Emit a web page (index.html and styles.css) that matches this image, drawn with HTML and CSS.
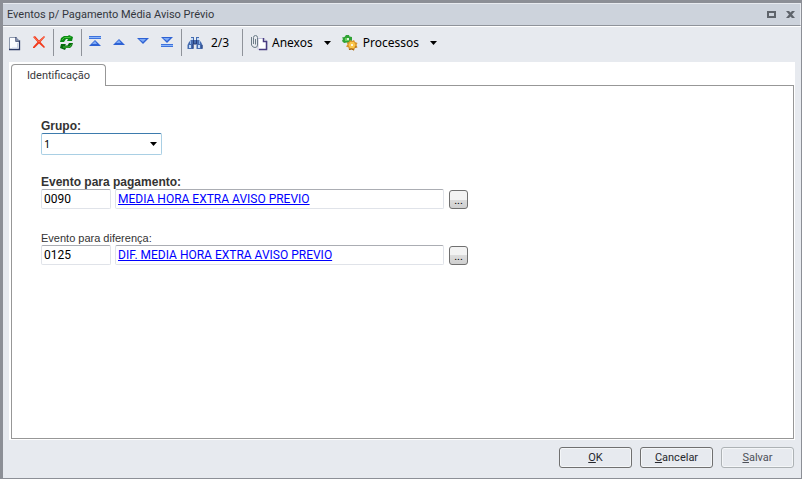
FILE: index.html
```html
<!doctype html>
<html lang="pt-BR">
<head>
    <meta charset="UTF-8">
    <title>Eventos p/ Pagamento Média Aviso Prévio</title>
    <link rel="stylesheet" href="styles.css">
</head>
<body>
<div class="window">
    <div class="titlebar">
        <h1 class="title">Eventos p/ Pagamento Média Aviso Prévio</h1>
        <button type="button" class="win-btn" aria-label="Maximizar">
            <svg width="9" height="7" viewBox="0 0 9 7"><path d="M0 0H9V7H0ZM2 2V5H7V2Z" fill="#5f646b" fill-rule="evenodd"/></svg>
        </button>
        <button type="button" class="win-btn" aria-label="Fechar">
            <svg width="9" height="7" viewBox="0 0 9 7"><path d="M0 0H3L4.500 1.500L6 0H9L6 3.500L9 7H6L4.500 5.500L3 7H0L3 3.500Z" fill="#5f646b"/></svg>
        </button>
    </div>
    <div class="toolbar">
        <button type="button" class="tool" aria-label="Novo">
            <svg width="16" height="16" viewBox="0 0 16 16">
                <path d="M2 2.500H9L12 5.500V14.500H2Z" fill="#fbfcff"/>
                <path d="M2.500 14V2.500H9" fill="none" stroke="#8d98ac"/>
                <path d="M9 2V6H12.500V14.500H2" fill="none" stroke="#2c3a66" stroke-width="1.300"/>
                <path d="M9 2L13 6H9Z" fill="#7c89a6"/>
                <path d="M10.500 8V13H5" fill="none" stroke="#ccd6ec"/>
            </svg>
        </button>
        <button type="button" class="tool" aria-label="Excluir">
            <svg width="16" height="16" viewBox="0 0 16 16">
                <path d="M2 2L4 1L8 5.500L13 1L14 2L9.500 7L14 12L13 13L8 8.500L3.500 13L2 13L2 12L6.500 7Z" fill="#f23a1c"/>
                <path d="M3 2L8 7L13 2" fill="none" stroke="#ff7350" stroke-width=".8"/>
            </svg>
        </button>
        <span class="sep"></span>
        <button type="button" class="tool" aria-label="Atualizar">
            <svg width="16" height="16" viewBox="0 0 16 16">
                <path d="M1 7L2 3L5 1L9 1L10 0L14 2L13 6H8L9 4H7L5 7Z" fill="#0a8a14"/>
                <path d="M14 8L13 11L11 13H7L6 15L1 13L2 9H7L6 10.500H8.500L10 8Z" fill="#066b0c"/>
                <path d="M3 5L5.500 2.500H10L12 2M4 12H10.500L12.500 9.500" fill="none" stroke="#47c33c"/>
            </svg>
        </button>
        <span class="sep"></span>
        <button type="button" class="tool" aria-label="Primeiro">
            <svg width="16" height="16" viewBox="0 0 16 16">
                <path d="M2 1H14V4H2Z" fill="#3e73dd"/><path d="M2 2.500H14" stroke="#8db7fa"/>
                <path d="M8 5L14 11H2Z" fill="#2e62d4"/><path d="M8 6L10 9H5Z" fill="#7eaaf6"/>
            </svg>
        </button>
        <button type="button" class="tool" aria-label="Anterior">
            <svg width="16" height="16" viewBox="0 0 16 16"><path d="M8 4L14 10H2Z" fill="#2e62d4"/><path d="M8 5L10 8H5Z" fill="#7eaaf6"/></svg>
        </button>
        <button type="button" class="tool" aria-label="Próximo">
            <svg width="16" height="16" viewBox="0 0 16 16"><path d="M2 3H14L8 9Z" fill="#2e62d4"/><path d="M4 4H11L8 7Z" fill="#7eaaf6"/></svg>
        </button>
        <button type="button" class="tool" aria-label="Último">
            <svg width="16" height="16" viewBox="0 0 16 16">
                <path d="M2 2H14L8 8Z" fill="#2e62d4"/><path d="M4 3H11L8 6Z" fill="#7eaaf6"/>
                <path d="M2 9H14V12H2Z" fill="#3e73dd"/><path d="M2 10.500H14" stroke="#8db7fa"/>
            </svg>
        </button>
        <span class="sep"></span>
        <button type="button" class="tool find" aria-label="Localizar">
            <svg width="16" height="16" viewBox="0 0 16 16">
                <path d="M4 2H7V5H9V2H12V5L14 7L15.500 10V14H9.500V9H6.500V14H.5V10L2 7L4 5Z" fill="#456cb0"/>
                <path d="M4 3H6V5H4ZM10 3H12V5H10ZM2 10H4V13H2ZM11 10H13V13H11Z" fill="#c6dcf8"/>
                <path d="M3.500 6V9M12.500 6V9" stroke="#8fb2e6"/>
                <path d="M6.500 5V9H9.500V5M6 9V13.500M15 10V13.500" fill="none" stroke="#273d78"/>
            </svg>
        </button>
        <span class="counter">2/3</span>
        <span class="sep"></span>
        <button type="button" class="menu">
            <svg width="18" height="16" viewBox="0 0 18 16">
                <path d="M7 3.500H13L16 6.500V14.500H7Z" fill="#fff" stroke="#c3c3dd"/>
                <path d="M12.500 3V6.500H15.500V14.500H8" fill="none" stroke="#493c80" stroke-width="1.500"/>
                <path d="M4.500 4V9.500M2.500 9V2.500Q2.500 .5 4.500 .5T6.500 2.500V10Q6.500 12.500 4 12.500T.5 10V2" fill="none" stroke="#6d7d88"/>
            </svg>
            <span class="menu-text">Anexos</span>
            <svg class="caret" width="7" height="4" viewBox="0 0 7 4"><path d="M0 0H7L3.500 4Z"/></svg>
        </button>
        <button type="button" class="menu">
            <svg width="18" height="16" viewBox="0 0 18 16">
                <path d="M4 0H7L7.500 1.500L10 2V5L9 8L6 9L5 7.500L2 8L0 6L1 4L0 2.500L2.500 2Z" fill="#31a236"/>
                <path d="M3 3H7V6H3Z" fill="#68cf5c"/><path d="M5 3H7V5H5Z" fill="#e0f4dc"/>
                <path d="M8 5L10 6L12 5L13 7L15.500 8L14.500 10L15.500 12.500L13 13L12 15.500L9.500 14.500L7 15L6.500 12.500L4 11.500L5.500 9.500L5 7.500L7 7Z" fill="#d9952a"/>
                <path d="M8 7H12L13.500 10L12 13H8L6.500 10Z" fill="#fac64a"/><path d="M9 9H11V11H9Z" fill="#fff5d8"/>
                <path d="M7 14.500L9.500 14L12 15M14.500 12H13" fill="none" stroke="#9a6318"/>
            </svg>
            <span class="menu-text">Processos</span>
            <svg class="caret" width="7" height="4" viewBox="0 0 7 4"><path d="M0 0H7L3.500 4Z"/></svg>
        </button>
    </div>
    <form class="main">
        <div class="tabs">
            <button type="button" class="tab">Identificação</button>
        </div>
        <div class="panel">
            <div class="field">
                <label class="label strong" for="grupo">Grupo:</label>
                <div class="combo">
                    <select id="grupo" class="select"><option>1</option></select>
                    <svg class="combo-arrow" width="7" height="4" viewBox="0 0 7 4"><path d="M0 0H7L3.500 4Z"/></svg>
                </div>
            </div>
            <div class="field">
                <label class="label strong" for="pagamento">Evento para pagamento:</label>
                <div class="row">
                    <input id="pagamento" class="box code" type="text" value="0090">
                    <div class="box desc"><a class="link" href="#">MEDIA HORA EXTRA AVISO PREVIO</a></div>
                    <button type="button" class="more">...</button>
                </div>
            </div>
            <div class="field">
                <label class="label" for="diferenca">Evento para diferença:</label>
                <div class="row">
                    <input id="diferenca" class="box code" type="text" value="0125">
                    <div class="box desc"><a class="link" href="#">DIF. MEDIA HORA EXTRA AVISO PREVIO</a></div>
                    <button type="button" class="more">...</button>
                </div>
            </div>
        </div>
    </form>
    <div class="footer">
        <button type="button" class="btn"><u>O</u>K</button>
        <button type="button" class="btn"><u>C</u>ancelar</button>
        <button type="button" class="btn" disabled><u>S</u>alvar</button>
    </div>
</div>
</body>
</html>
```
FILE: styles.css
```css
* {box-sizing: border-box; margin: 0; padding: 0;}
body {padding-bottom: 1px; background: #fff; font-family: Roboto, sans-serif; font-size: 11px; color: #000;}
button {font: inherit; color: inherit; background: none; border: 0;}
svg {display: block; flex: none;}

.window {display: flex; flex-direction: column; min-height: calc(100vh - 1px); background: #e7eaef; border: solid #8c8f96; border-width: 3px 1px 1px 3px;}

.titlebar {display: flex; align-items: center; gap: 10px; height: 23px; padding: 0 5px 0 4px; background: #cdd3dc; border: 1px solid #e7eaef; border-left: 0; border-bottom: 1px solid #8f939a;}
.title {flex: 1; font-size: 11px; font-weight: normal; color: #33363c;}

.toolbar {display: flex; align-items: center; height: 36px; padding-bottom: 4px; border-top: 1px solid #fff;}
.tool {width: 24px; height: 24px; padding: 4px;}
.find {width: 26px;}
.sep {width: 1px; height: 27px; margin: 0 1px 0 2px; background: #8f939a;}
.counter {width: 31px; padding-left: 2px; font-family: "Noto Sans", sans-serif; font-size: 12px;}
.menu {display: flex; align-items: center; height: 24px; padding: 0 4px 0 7px; font-family: "Noto Sans", sans-serif; font-size: 12px;}
.menu-text {padding: 0 11px 0 3px;}

.main {flex: 1; display: flex; flex-direction: column; margin: 0 6px; padding: 2px 1px 1px 2px; background: #fff;}
.tabs {display: flex; height: 22px; margin-bottom: -1px; z-index: 1;}
.tab {width: 95px; background: #fff; border: 1px solid #979797; border-bottom: 0; border-radius: 4px 4px 0 0; color: #3a3a40;}
.panel {flex: 1; padding: 33px 29px; border: 1px solid #979797;}

.field {margin-bottom: 20px;}
.label {display: block; height: 14px; line-height: 14px; font-family: "Liberation Sans", Arial, sans-serif; font-size: 11px; color: #333;}
.strong {font-size: 12px; font-weight: bold;}
.combo {display: grid; align-items: center; width: 121px;}
.select {grid-area: 1 / 1; height: 22px; padding: 0 2px 2px; appearance: none; background: #fff; border: 1px solid #a9cfe4; border-top-color: #3d7bad; border-radius: 2px; font-family: "Noto Sans", sans-serif; font-size: 11px;}
.combo-arrow {grid-area: 1 / 1; justify-self: end; margin-right: 5px; pointer-events: none;}
.row {display: flex; align-items: flex-start; height: 22px;}
.box {height: 20px; line-height: 18px; padding: 0 2px; background: #fff; border: 1px solid #e0e3e9; border-top-color: #abadb3; border-radius: 2px; font-family: Roboto, sans-serif; font-size: 12px;}
.code {width: 70px; margin-right: 4px;}
.desc {flex: 0 1 329px; margin-right: 5px;}
.link {color: #00f;}
.more {width: 19px; height: 19px; margin-top: 1px; padding-top: 3px; line-height: 14px; background: linear-gradient(#f3f3f3 50%, #dcdcdc 50%, #cfcfcf); border: 1px solid #707070; border-radius: 3px;}

.footer {display: flex; justify-content: flex-end; gap: 8px; padding: 7px 7px 10px;}
.btn {width: 73px; height: 21px; background: #e7eaef; border: 1px solid #707070; border-radius: 3px; box-shadow: inset 0 0 0 1px #f4f6f8; color: #26282e;}
.btn:disabled {border-color: #adb2b5; color: #4d5058;}
```
